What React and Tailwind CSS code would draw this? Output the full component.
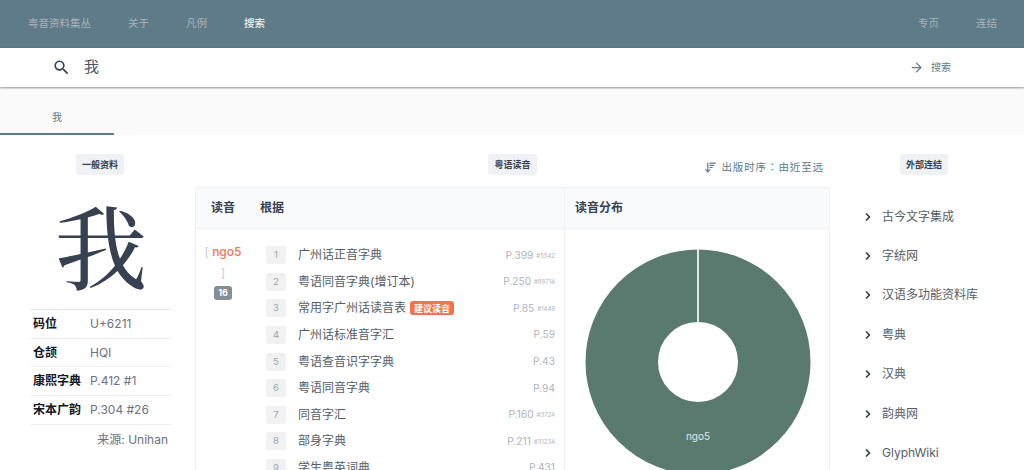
import { ArrowRight, ChevronRight, ArrowDownWideNarrow } from "lucide-react";

const rows = [
  ["广州话正音字典", "P.399", "#5542"],
  ["粤语同音字典(增订本)", "P.250", "#88714"],
  ["常用字广州话读音表", "P.85", "#1449", true],
  ["广州话标准音字汇", "P.59"],
  ["粤语查音识字字典", "P.43"],
  ["粤语同音字典", "P.94"],
  ["同音字汇", "P.160", "#3724"],
  ["部身字典", "P.211", "#31234"],
  ["学生粤英词典", "P.431"],
];
const links = ["古今文字集成", "字统网", "汉语多功能资料库", "粤典", "汉典", "韵典网", "GlyphWiki"];
const info = [["码位", "U+6211"], ["仓颉", "HQI"], ["康熙字典", "P.412 #1"], ["宋本广韵", "P.304 #26"]];

function Chip({ children }) {
  return <div className="rounded-[3px] bg-[#eff1f4] px-[6px] h-[21px] flex items-center text-[9px] font-semibold text-[#374151]">{children}</div>;
}

export default function App() {
  return (
    <div className="h-[470px] w-[1024px] overflow-hidden bg-white font-['Inter','Noto_Sans_CJK_SC',sans-serif] text-[#4b5563]">
      <header className="h-[48px] bg-[#5f7a88] flex items-center justify-between pl-[28px] pr-[27px] text-[10.5px] text-white/45">
        <nav className="flex items-center gap-[37px]">
          <span>粤音资料集丛</span>
          <span>关于</span>
          <span>凡例</span>
          <span className="text-white/90 font-medium">搜索</span>
        </nav>
        <nav className="flex items-center gap-[37px]">
          <span>专页</span>
          <span>连结</span>
        </nav>
      </header>

      <div className="relative z-10 h-[39px] bg-white flex items-center justify-between pl-[52px] pr-[73px] shadow-[0_1px_2px_rgba(0,0,0,0.4)]">
        <div className="flex items-center gap-[13px]">
          <svg width="19" height="19" viewBox="0 0 24 24" fill="#374151">
            <path d="M15.5 14h-.79l-.28-.27A6.471 6.471 0 0 0 16 9.5 6.5 6.5 0 1 0 9.5 16c1.61 0 3.09-.59 4.23-1.57l.27.28v.79l5 4.99L20.49 19l-4.99-5zm-6 0C7.01 14 5 11.99 5 9.5S7.01 5 9.5 5 14 7.01 14 9.5 11.99 14 9.5 14z" />
          </svg>
          <span className="text-[15px] text-[#4b5563]">我</span>
        </div>
        <div className="flex items-center gap-[7px] text-[10px] text-[#5f7a88]">
          <ArrowRight size={15} strokeWidth={2} />
          <span>搜索</span>
        </div>
      </div>

      <div className="h-[48px] bg-[#fafafa] flex items-end">
        <div className="w-[114px] h-[48px] border-b-2 border-[#5f7a88] pl-[52px] pt-[22px] text-[10px] leading-[16px] text-[#5f7a88]">我</div>
      </div>

      <main className="flex">
        <section className="w-[195px] shrink-0 pl-[30px] pr-[23px] pt-[19px] flex flex-col items-stretch">
          <div className="flex justify-center pr-[2px]"><Chip>一般资料</Chip></div>
          <div className="h-[133px] mt-[1px] flex items-center justify-center text-[92px] leading-none font-medium text-[#374151] font-['Noto_Serif_CJK_SC','Noto_Sans_CJK_SC',serif]">我</div>
          <div className="border-t border-[#e5e7eb]">
            {info.map(([k, v]) => (
              <div key={k} className="h-[28.7px] border-b border-[#eeeff1] flex items-center pl-[3px] text-[12px]">
                <span className="w-[57px] font-bold text-[#111827]">{k}</span>
                <span className="text-[#6b7280]">{v}</span>
              </div>
            ))}
          </div>
          <div className="mt-[6px] pr-[4px] text-right text-[12px] text-[#6b7280]">来源: Unihan</div>
        </section>

        <section className="w-[635px] shrink-0">
          <div className="relative flex justify-center pt-[19px] h-[52px]">
            <Chip>粤语读音</Chip>
            <div className="absolute right-[6px] top-[25px] flex items-center gap-[4px] text-[10.5px] tracking-[0.9px] text-[#5f7a88] font-['Inter','Noto_Sans_CJK_TC',sans-serif]">
              <ArrowDownWideNarrow size={13} strokeWidth={2.25} />
              <span>出版时序：由近至远</span>
            </div>
          </div>
          <div className="border border-[#f0f1f3] flex">
            <div className="w-[369px] border-r border-[#f0f1f3]">
              <div className="h-[41px] bg-[#f9fafb] border-b border-[#f0f1f3] flex items-center text-[12px] font-bold text-[#374151]">
                <span className="pl-[15px] w-[64px]">读音</span>
                <span>根据</span>
              </div>
              <div className="flex">
                <div className="w-[54px] pt-[12px] flex flex-col items-center text-[12px] font-medium leading-[21px]">
                  <div className="whitespace-nowrap"><span className="text-[#d1d5db]">[ </span><span className="text-[#f0764f]">ngo5</span></div>
                  <div className="text-[#d1d5db]">]</div>
                  <div className="mt-[3px] rounded-[3px] bg-[#858e98] text-white text-[9px] leading-[14px] font-bold px-[4px]">16</div>
                </div>
                <div className="flex-1 pl-[16px] pr-[9px] pt-[13px]">
                  {rows.map(([name, page, num, badge], i) => (
                    <div key={i} className="h-[26.6px] flex items-center">
                      <span className="w-[20px] h-[18px] rounded-[3px] bg-[#f1f1f2] flex items-center justify-center text-[9.5px] text-[#9ca3af]">{i + 1}</span>
                      <span className="ml-[12px] text-[12px] text-[#555d68]">{name}</span>
                      {badge && <span className="ml-[4px] rounded-[3px] bg-[#f5734a] text-white text-[9px] font-bold px-[4px] h-[14px] flex items-center">建议读音</span>}
                      <span className="ml-auto text-[10.2px] text-[#b0b4ba]">{page}</span>
                      {num && <span className="ml-[3px] text-[6px] text-[#b0b4ba]">{num}</span>}
                    </div>
                  ))}
                </div>
              </div>
            </div>
            <div className="flex-1">
              <div className="h-[41px] bg-[#f9fafb] border-b border-[#f0f1f3] flex items-center pl-[10px] text-[12px] font-bold text-[#374151]">读音分布</div>
              <div className="pl-[20px] pt-[20px]">
                <svg width="226" height="226" viewBox="0 0 226 226" className="block">
                  <circle cx="113" cy="113" r="76.25" fill="none" stroke="#5b7a6f" strokeWidth="72.5" />
                  <rect x="112.2" y="0" width="1.6" height="73" fill="#fff" />
                  <text x="113" y="191" textAnchor="middle" fontSize="10" fill="#e5e7eb" fontFamily="Inter, sans-serif">ngo5</text>
                </svg>
              </div>
            </div>
          </div>
        </section>

        <section className="flex-1 pt-[19px]">
          <div className="flex justify-center pr-[6px]"><Chip>外部连结</Chip></div>
          <ul className="mt-[22px] pl-[32px]">
            {links.map((l) => (
              <li key={l} className="h-[39.4px] flex items-center gap-[8px] text-[12px] text-[#555d68]">
                <ChevronRight size={12} strokeWidth={3.5} className="text-[#374151]" />
                <span>{l}</span>
              </li>
            ))}
          </ul>
        </section>
      </main>
    </div>
  );
}
